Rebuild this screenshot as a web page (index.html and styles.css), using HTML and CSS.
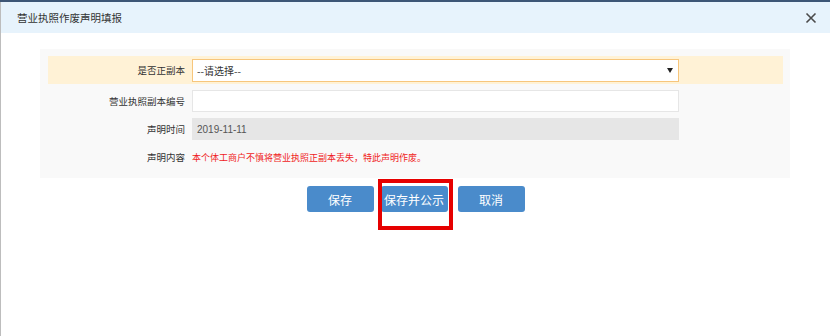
FILE: index.html
```html
<!DOCTYPE html>
<html lang="zh">
<head>
<meta charset="utf-8">
<title>营业执照作废声明填报</title>
<link rel="stylesheet" href="styles.css">
</head>
<body>
<div class="topstrip"></div>
<div class="dialog">
  <div class="header">
    <span class="title">营业执照作废声明填报</span>
    <svg class="close" width="12" height="12" viewBox="0 0 12 12"><path d="M1.5 1.5 L10.5 10.5 M10.5 1.5 L1.5 10.5" stroke="#4a4a4a" stroke-width="1.6" fill="none"/></svg>
  </div>
  <div class="content">
    <div class="panel">
      <div class="row row-hl">
        <div class="label">是否正副本</div>
        <div class="select"><span>--请选择--</span><span class="arrow"></span></div>
      </div>
      <div class="row">
        <div class="label">营业执照副本编号</div>
        <div class="input"></div>
      </div>
      <div class="row">
        <div class="label">声明时间</div>
        <div class="input input-disabled">2019-11-11</div>
      </div>
      <div class="row">
        <div class="label">声明内容</div>
        <div class="notice">本个体工商户不慎将营业执照正副本丢失，特此声明作废。</div>
      </div>
    </div>
    <div class="actions">
      <button class="btn">保存</button>
      <button class="btn btn-mid">保存并公示<span class="mark"></span></button>
      <button class="btn">取消</button>
    </div>
  </div>
</div>
</body>
</html>
```
FILE: styles.css
```css
html, body {
  margin: 0;
  padding: 0;
  background: #ffffff;
  width: 830px;
  height: 336px;
  overflow: hidden;
  font-family: "Noto Sans CJK SC", "Liberation Sans", sans-serif;
  font-size: 12px;
  color: #333;
}
.topstrip {
  height: 2px;
  background: #3d5676;
}
.dialog {
  border-left: 1px solid #bdbdbd;
  height: 334px;
  box-sizing: border-box;
}
.header {
  height: 31px;
  background: #e7f3fc;
  display: flex;
  align-items: center;
  justify-content: space-between;
  padding: 0 13px 0 16px;
}
.title {
  font-size: 10.5px;
  color: #333;
}
.close {
  display: block;
}
.content {
  padding-top: 16px;
}
.panel {
  margin-left: 39px;
  width: 750px;
  background: #f9f9f9;
  padding: 7px 7px 7px 8px;
  box-sizing: border-box;
}
.row {
  display: flex;
  align-items: center;
  height: 28px;
}
.row-hl {
  background: #fff2d6;
  margin-bottom: 3px;
}
.label {
  width: 144px;
  text-align: right;
  padding-right: 7px;
  box-sizing: border-box;
  font-size: 9.5px;
  color: #333;
}
.select {
  width: 487px;
  height: 23px;
  box-sizing: border-box;
  border: 1px solid #f7c67c;
  background: #fff;
  display: flex;
  align-items: center;
  justify-content: space-between;
  padding: 0 5px 0 4px;
  color: #333;
  font-size: 10px;
}
.arrow {
  width: 0;
  height: 0;
  border-left: 3px solid transparent;
  border-right: 3px solid transparent;
  border-top: 5px solid #222;
}
.input {
  width: 487px;
  height: 22px;
  box-sizing: border-box;
  border: 1px solid #e6e6e6;
  background: #fff;
  display: flex;
  align-items: center;
  padding-left: 4px;
}
.input-disabled {
  background: #e6e6e6;
  border-color: #e6e6e6;
  color: #555;
  font-family: "Liberation Sans", sans-serif;
  font-size: 10px;
}
.notice {
  color: #f01c1c;
  font-size: 9px;
}
.actions {
  display: flex;
  justify-content: center;
  margin-top: 8px;
  gap: 0;
}
.btn {
  width: 67px;
  height: 26px;
  border: none;
  border-radius: 3px;
  background: #4a8bcb;
  color: #fff;
  font-family: "Noto Sans CJK SC", sans-serif;
  font-size: 12px;
  padding: 0;
  margin: 0;
  position: relative;
}
.btn-mid {
  margin: 0 10px 0 7px;
}
.mark {
  position: absolute;
  left: -3px;
  top: -7px;
  width: 75px;
  height: 51px;
  border: 4px solid #e60000;
  box-sizing: border-box;
}
```
